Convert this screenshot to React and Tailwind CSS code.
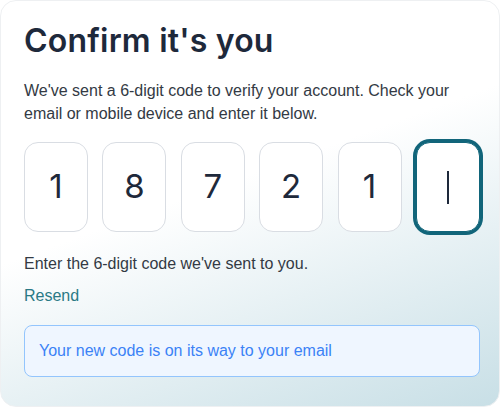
export default function App() {
  const digits = ["1", "8", "7", "2", "1"];
  return (
    <div className="w-[500px] h-[407px] bg-white">
      <div className="w-full h-full rounded-2xl border border-[#eef0f2] bg-[linear-gradient(160deg,#ffffff_45%,#c8dfe6_100%)] pl-[23px] pr-[19px] pt-[20px] font-['Liberation_Sans',Arial,sans-serif]">
        <h1 className="text-[32px] leading-[40px] font-semibold text-[#1e293b] font-['Inter',sans-serif] tracking-[0.2px]">
          Confirm it's you
        </h1>
        <p className="mt-[18px] text-[16px] leading-[23px] text-[#333a44]">
          We've sent a 6-digit code to verify your account. Check your email or mobile device and enter it below.
        </p>
        <div className="mt-[17px] flex justify-between w-[456px]">
          {digits.map((d, i) => (
            <div
              key={i}
              className="w-16 h-[90px] rounded-[14px] border border-[#d9dde3] bg-white flex items-center justify-center text-[33px] text-[#1e293b] font-['Inter',sans-serif]"
            >
              {d}
            </div>
          ))}
          <div className="w-16 h-[90px] rounded-[14px] border border-[#11657a] ring-[3px] ring-[#11657a] bg-white flex items-center justify-center">
            <div className="w-[1.5px] h-[33px] bg-[#1e293b]" />
          </div>
        </div>
        <p className="mt-[20px] text-[16px] leading-[23px] text-[#333a44]">
          Enter the 6-digit code we've sent to you.
        </p>
        <p className="mt-[9px] text-[16px] leading-[23px] text-[#2a7985]">Resend</p>
        <div className="mt-[18px] h-[52px] rounded-lg border border-[#93c5fd] bg-[#eff6ff] px-[14px] flex items-center text-[16px] text-[#3b82f6]">
          Your new code is on its way to your email
        </div>
      </div>
    </div>
  );
}
